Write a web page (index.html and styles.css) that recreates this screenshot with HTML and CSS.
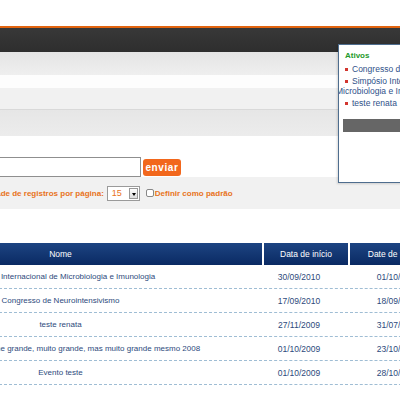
FILE: index.html
```html
<!DOCTYPE html>
<html lang="pt">
<head>
<meta charset="utf-8">
<title>Eventos</title>
<link rel="stylesheet" href="styles.css">
</head>
<body>
<div class="page">
  <div class="top"></div>
  <div class="nav"></div>
  <div class="band band1"></div>
  <div class="band band2"></div>
  <div class="band band3"></div>
  <div class="band band4"></div>

  <div class="search">
    <input class="search-input" type="text">
    <button class="btn" type="button">enviar</button>
  </div>

  <div class="options">
    <span class="opt-label">Quantidade de registros por página:</span>
    <span class="select"><span class="select-val">15</span><span class="select-arrow"></span></span>
    <span class="check"></span>
    <span class="opt-text">Definir como padrão</span>
  </div>

  <table class="grid">
    <thead>
      <tr><th class="c1">Nome</th><th class="c2">Data de início</th><th class="c3">Date de término</th></tr>
    </thead>
    <tbody>
      <tr><td class="c1">Simpósio Internacional de Microbiologia e Imunologia</td><td class="c2">30/09/2010</td><td class="c3">01/10/2010</td></tr>
      <tr><td class="c1">Congresso de Neurointensivismo</td><td class="c2">17/09/2010</td><td class="c3">18/09/2010</td></tr>
      <tr><td class="c1">teste renata</td><td class="c2">27/11/2009</td><td class="c3">31/07/2010</td></tr>
      <tr><td class="c1">Evento teste com nome grande, muito grande, mas muito grande mesmo 2008</td><td class="c2">01/10/2009</td><td class="c3">23/10/2009</td></tr>
      <tr><td class="c1">Evento teste</td><td class="c2">01/10/2009</td><td class="c3">28/10/2009</td></tr>
    </tbody>
  </table>

  <div class="panel">
    <div class="panel-title">Ativos</div>
    <ul class="panel-list">
      <li><span class="bullet"></span>Congresso de Neurointensivismo</li>
      <li><span class="bullet"></span>Simpósio Internacional de Microbiologia e Imunologia</li>
      <li><span class="bullet"></span>teste renata</li>
    </ul>
    <div class="panel-bar"></div>
  </div>
</div>
</body>
</html>
```
FILE: styles.css
```css
html, body {
  margin: 0;
  padding: 0;
  background: #fff;
}
body {
  width: 400px;
  height: 400px;
  overflow: hidden;
  font-family: "Liberation Sans", Arial, sans-serif;
}
.page {
  position: relative;
  width: 400px;
}
.top {
  height: 26px;
  background: #fff;
  border-bottom: 2px solid #e2640f;
}
.nav {
  height: 24px;
  background: linear-gradient(#383838, #2e2e2e);
}
.band1 {
  height: 23px;
  background: linear-gradient(#e4e4e4, #efefef);
}
.band2 {
  height: 13px;
  background: #fdfdfd;
}
.band3 {
  height: 21px;
  background: #f1f1f1;
  border-bottom: 1px solid #d9d9d9;
}
.band4 {
  height: 26px;
  background: linear-gradient(#e6e6e6, #ececec);
}
.search {
  display: flex;
  align-items: center;
  gap: 2px;
  padding-top: 21px;
  margin-left: -80px;
}
.search-input {
  box-sizing: border-box;
  width: 221px;
  height: 20px;
  margin: 0;
  border: 1px solid #8f8f8f;
  background: #fff;
}
.btn {
  box-sizing: border-box;
  width: 38px;
  height: 17px;
  margin: 0;
  padding: 0;
  border: none;
  border-radius: 3px;
  background: #f2671c;
  color: #fff;
  font-family: "Liberation Sans", Arial, sans-serif;
  font-weight: bold;
  font-size: 10px;
  letter-spacing: 0.6px;
}
.options {
  display: flex;
  align-items: center;
  height: 32px;
  background: #f1f1f1;
  margin-left: -34px;
  color: #e8731b;
  font-size: 8px;
  font-weight: bold;
}
.opt-label {
  white-space: nowrap;
  margin-right: 3px;
}
.select {
  box-sizing: border-box;
  display: flex;
  align-items: center;
  width: 33px;
  height: 15px;
  background: #fff;
  border: 1px solid #9a9a9a;
  font-weight: normal;
  font-size: 9px;
  color: #e8731b;
}
.select-val {
  flex: 1;
  padding-left: 4px;
}
.select-arrow {
  box-sizing: border-box;
  width: 9px;
  height: 11px;
  margin-right: 1px;
  border: 1px solid #999;
  background: linear-gradient(#fff, #ddd);
  position: relative;
}
.select-arrow::after {
  content: "";
  position: absolute;
  left: 2px;
  top: 4px;
  border-left: 2px solid transparent;
  border-right: 2px solid transparent;
  border-top: 3px solid #000;
}
.check {
  box-sizing: border-box;
  width: 8px;
  height: 8px;
  margin-left: 6px;
  border: 1px solid #888;
  border-radius: 2px;
  background: #fff;
}
.opt-text {
  margin-left: 1px;
  white-space: nowrap;
}
.grid {
  width: 591px;
  margin-top: 34px;
  margin-left: -143px;
  border-collapse: separate;
  border-spacing: 2px 0;
  font-size: 8.5px;
  color: #2d4a7c;
  table-layout: fixed;
}
.grid th {
  height: 22px;
  padding: 0;
  background: linear-gradient(#1d4482, #0a2a63);
  color: #fff;
  font-weight: normal;
  font-size: 8.5px;
  text-align: center;
}
.grid td {
  height: 23px;
  padding: 0;
  border-bottom: 1px dashed #9fbdd4;
  text-align: center;
  white-space: nowrap;
}
.grid td.c1 {
  font-size: 8px;
}
.grid td.c2 {
  padding-right: 14px;
}
.c1 { width: 403px; }
.c2 { width: 84px; }
.c3 { width: 96px; }
.panel {
  position: absolute;
  left: 338px;
  top: 44px;
  box-sizing: border-box;
  width: 160px;
  height: 139px;
  padding: 6px 0 0 6px;
  background: #fff;
  border: 1px solid #4e6d8e;
  box-shadow: -1px 1px 2px rgba(0,0,0,0.15);
  overflow: hidden;
}
.panel-title {
  color: #1f9a2b;
  font-weight: bold;
  font-size: 8px;
  line-height: 10px;
}
.panel-list {
  list-style: none;
  margin: 3px 0 0 0;
  padding: 0;
  color: #2f5189;
  font-size: 8.5px;
  line-height: 10px;
}
.panel-list li {
  margin: 0 0 2px -9px;
  text-indent: 9px;
  width: 125px;
}
.bullet {
  display: inline-block;
  width: 3px;
  height: 3px;
  background: #d2362f;
  margin-right: 4px;
  vertical-align: middle;
  text-indent: 0;
}
.panel-list li:first-child,
.panel-list li:last-child {
  white-space: nowrap;
}
.panel-bar {
  height: 13px;
  margin-top: 11px;
  margin-left: -2px;
  background: #666;
}
```
